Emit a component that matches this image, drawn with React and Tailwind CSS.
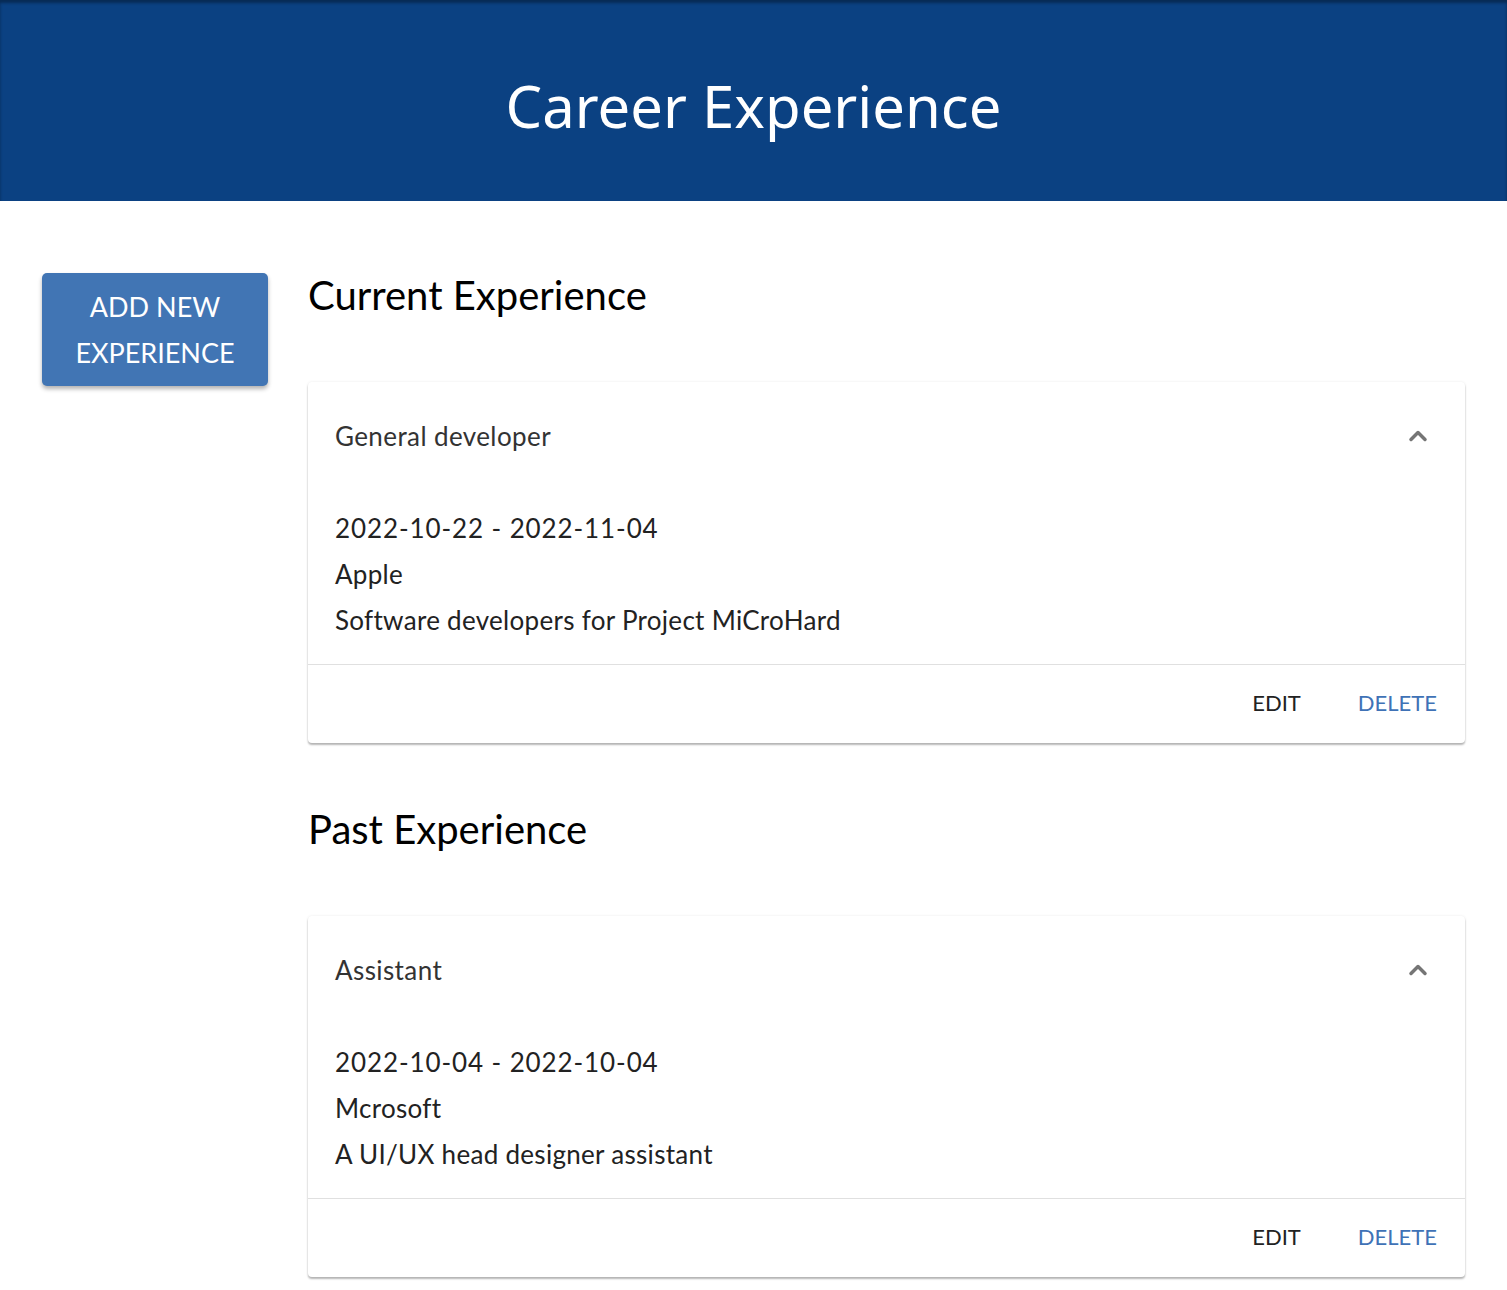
import { ChevronUp } from 'lucide-react';

const experiences = {
  current: [
    {
      title: 'General developer',
      dates: '2022-10-22 - 2022-11-04',
      company: 'Apple',
      description: 'Software developers for Project MiCroHard',
    },
  ],
  past: [
    {
      title: 'Assistant',
      dates: '2022-10-04 - 2022-10-04',
      company: 'Mcrosoft',
      description: 'A UI/UX head designer assistant',
    },
  ],
};

const ExperienceCard = ({ item }) => (
  <div className="bg-white rounded-[4px] shadow-[0_2px_2px_rgba(0,0,0,0.28),0_0_3px_rgba(0,0,0,0.08)]">
    <div className="px-[27px] pt-[38px] pb-[28px]">
      <div className="flex items-center justify-between">
        <span className="text-[26px] text-[#333] leading-[32px] tracking-[0.4px]">{item.title}</span>
        <ChevronUp className="w-[28px] h-[28px] text-[#757575] mr-[6px]" strokeWidth={3} />
      </div>
      <div className="mt-[60px] flex flex-col gap-[14px] text-[26px] text-[#222] leading-[32px] tracking-[0.3px]">
        <span className="tracking-[0.9px]">{item.dates}</span>
        <span>{item.company}</span>
        <span>{item.description}</span>
      </div>
    </div>
    <div className="border-t border-[#e0e0e0] h-[79px] flex items-center justify-end gap-[57px] pr-[28px] text-[22px] pb-[3px]">
      <button className="text-[#222] uppercase">Edit</button>
      <button className="text-[#3f72b6] uppercase">Delete</button>
    </div>
  </div>
);

const Section = ({ title, items }) => (
  <section>
    <h2 className="text-[40px] text-black leading-[44px]">{title}</h2>
    <div className="mt-[65px] flex flex-col gap-6">
      {items.map((item) => (
        <ExperienceCard key={item.title} item={item} />
      ))}
    </div>
  </section>
);

export default function App() {
  return (
    <div className="min-h-screen bg-white" style={{ fontFamily: 'Lato, "Noto Sans", sans-serif' }}>
      <header className="h-[201px] bg-[#0b4182] flex items-center justify-center shadow-[inset_0_3px_3px_rgba(0,0,0,0.35)]">
        <h1 className="text-white text-[58px] pt-[10px]" style={{ fontFamily: '"Noto Sans", sans-serif' }}>
          Career Experience
        </h1>
      </header>
      <main className="flex gap-[40px] pl-[42px] pr-[42px] pt-[72px] pb-[12px]">
        <div className="w-[226px] shrink-0">
          <button className="w-full h-[113px] rounded-[5px] bg-[#4175b4] text-white text-[27px] leading-[46px] uppercase shadow-[0_3px_4px_rgba(0,0,0,0.3)]">
            Add new
            <br />
            experience
          </button>
        </div>
        <div className="flex-1 flex flex-col gap-[64px]">
          <Section title="Current Experience" items={experiences.current} />
          <Section title="Past Experience" items={experiences.past} />
        </div>
      </main>
    </div>
  );
}
